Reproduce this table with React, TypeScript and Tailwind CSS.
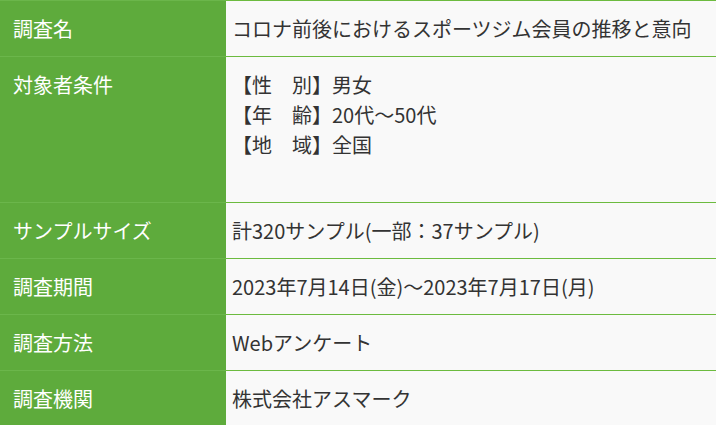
import React from "react";

const rows: { label: string; value: React.ReactNode }[] = [
  { label: "調査名", value: "コロナ前後におけるスポーツジム会員の推移と意向" },
  {
    label: "対象者条件",
    value: (
      <>
        【性　別】男女
        <br />
        【年　齢】20代〜50代
        <br />
        【地　域】全国
        <br />
        <br />
      </>
    ),
  },
  { label: "サンプルサイズ", value: "計320サンプル(一部：37サンプル)" },
  { label: "調査期間", value: "2023年7月14日(金)〜2023年7月17日(月)" },
  { label: "調査方法", value: "Webアンケート" },
  { label: "調査機関", value: "株式会社アスマーク" },
];

export default function App() {
  return (
    <div className="w-[716px] h-[425px] overflow-hidden bg-white font-['Noto_Sans_CJK_JP','Noto_Sans',sans-serif] text-[20px] leading-[30px]">
      {rows.map((r) => (
        <div key={r.label} className="flex">
          <div className="w-[226px] shrink-0 bg-[#5eab3c] border-t border-[#6bb64b] pl-[13px] pt-[13px] pb-[12px] text-white">
            {r.label}
          </div>
          <div className="flex-1 bg-[#f9f9f9] border-t border-[#6cbb3f] pl-[6px] pt-[13px] pb-[12px] text-[#333333]">
            {r.value}
          </div>
        </div>
      ))}
    </div>
  );
}
